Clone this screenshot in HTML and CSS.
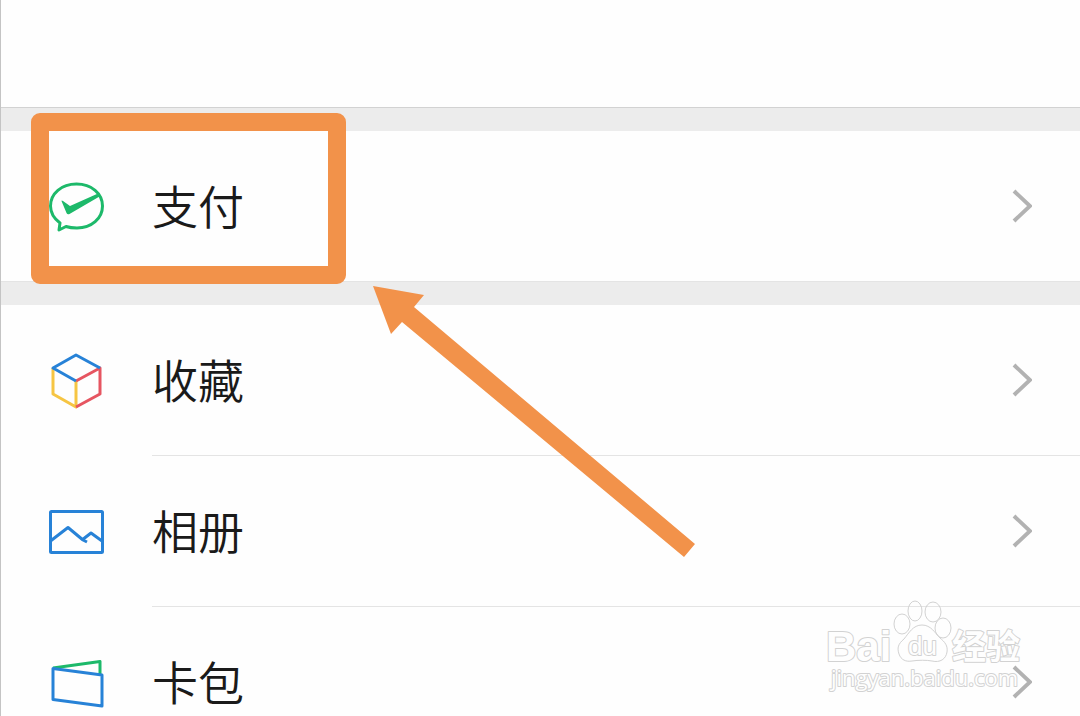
FILE: index.html
```html
<!DOCTYPE html>
<html lang="zh-CN">
<head>
    <meta charset="UTF-8">
    <meta name="viewport" content="width=device-width, initial-scale=1.0">
    <title>我</title>
    <link rel="stylesheet" href="styles.css">
</head>
<body>
    <header class="profile"></header>

    <nav class="menu">
        <div class="group">
            <a class="row" href="#pay">
                <svg class="icon" viewBox="0 0 56 56">
                    <path class="line green" d="M12 44 L11 51 L18 47.5 C21 48.5 25 49 29 49 C43.500 49 54.500 39.500 54.500 27 C54.500 14.500 43.500 5 28.500 5 C13.500 5 2.500 14.500 2.500 27 C2.500 34 6 39.500 12 44 Z"/>
                    <path class="fill-green" d="M13.500 22 Q13.500 21 15 22 L22 27 L50 14.500 L51.500 17.500 L21.500 35 Q19.500 36 18.500 34 Z"/>
                </svg>
                <span class="content">
                    <span class="label">支付</span>
                    <svg class="chevron" viewBox="0 0 20 36"><path d="M2 3 L18 18 L2 33"/></svg>
                </span>
            </a>
            <div class="highlight"></div>
        </div>

        <div class="group">
            <a class="row" href="#favorites">
                <svg class="icon" viewBox="0 0 56 56">
                    <path class="line yellow" d="M5 15 V41 L28 54 V28"/>
                    <path class="line red" d="M28 28 L52 15 V41 L28 54"/>
                    <path class="line blue" d="M28 28 L5 15 L28 2 L52 15"/>
                </svg>
                <span class="content">
                    <span class="label">收藏</span>
                    <svg class="chevron" viewBox="0 0 20 36"><path d="M2 3 L18 18 L2 33"/></svg>
                </span>
            </a>
            <a class="row" href="#album">
                <svg class="icon" viewBox="0 0 56 56">
                    <rect class="line blue" x="2.500" y="7.500" width="52" height="41" rx="1"/>
                    <path class="line blue" d="M2.500 37 L20 23.500 L35 36 L39 38 M34 36 L43 29 L54 37"/>
                </svg>
                <span class="content">
                    <span class="label">相册</span>
                    <svg class="chevron" viewBox="0 0 20 36"><path d="M2 3 L18 18 L2 33"/></svg>
                </span>
            </a>
            <a class="row" href="#cards">
                <svg class="icon" viewBox="0 0 56 56">
                    <path class="line green" d="M5 13 L52 6.500 V19"/>
                    <path class="line blue" d="M5 13.500 L54 20 V51 L5 44.500 Z"/>
                </svg>
                <span class="content">
                    <span class="label">卡包</span>
                    <svg class="chevron" viewBox="0 0 20 36"><path d="M2 3 L18 18 L2 33"/></svg>
                </span>
            </a>
            <svg class="arrow" viewBox="0 0 322 272">
                <path d="M0 0 L51 9 L41 21 L322 258 L311 271 L29 36 L18 48 Z"/>
            </svg>
        </div>
    </nav>

    <div class="watermark">
        <svg viewBox="0 0 210 100">
            <g class="outline">
                <ellipse cx="82" cy="27" rx="8" ry="10"/>
                <ellipse cx="95" cy="14" rx="7" ry="10"/>
                <ellipse cx="113" cy="15" rx="8" ry="10"/>
                <ellipse cx="123" cy="31" rx="8" ry="10"/>
                <path d="M102 28 C93 28 89 36 84 42 C78 47 77 51 79 57 C81 63 86 65 92 64 C98 63 107 63 112 64 C120 66 126 62 127 55 C128 49 125 45 120 41 C115 36 111 28 102 28 Z"/>
            </g>
            <text class="brand" x="6" y="64">Bai</text>
            <text class="du" x="88" y="58">du</text>
            <text class="cjk" x="132" y="62">经验</text>
            <text class="site" x="11" y="89">jingyan.baidu.com</text>
        </svg>
    </div>
</body>
</html>
```

FILE: styles.css
```css
* {
    box-sizing: border-box;
}
body {
    position: relative;
    height: 100vh;
    margin: 0;
    overflow: hidden;
    border-left: 1px solid #c4c4c4;
    background-color: #fefefe;
    color: #1a1a1a;
    font-family: "Noto Sans CJK SC", sans-serif;
}
.profile {
    height: 107px;
}
.group {
    position: relative;
    border-top: 24px solid #ececec;
}
.group::before {
    content: "";
    position: absolute;
    top: -24px;
    left: 0;
    right: 0;
    height: 1px;
    background-color: #e4e4e4;
}
.group:first-child::before {
    background-color: #d2d2d2;
}
.row {
    display: flex;
    align-items: stretch;
    gap: 48px;
    padding-left: 47px;
    color: inherit;
    text-decoration: none;
}
.icon {
    flex: none;
    align-self: center;
    width: 56px;
    height: 56px;
    margin-top: 2px;
}
.content {
    flex: 1;
    display: flex;
    align-items: center;
    justify-content: space-between;
    padding: 46px 48px 46px 0;
}
.row + .row .content {
    border-top: 1px solid #e4e4e4;
}
.label {
    padding-bottom: 4px;
    font-size: 46px;
    font-weight: 350;
    line-height: 54px;
}
.chevron {
    width: 20px;
    height: 36px;
}
.chevron path {
    fill: none;
    stroke: #b2b2b2;
    stroke-width: 4;
}

/* icon colours */
.line {
    fill: none;
    stroke-width: 3;
    stroke-linejoin: round;
}
.green {
    stroke: #1db96a;
}
.blue {
    stroke: #2782d7;
}
.red {
    stroke: #e65561;
}
.yellow {
    stroke: #f6c543;
}
.fill-green {
    fill: #1db96a;
}

/* annotations */
.highlight {
    position: absolute;
    top: -18px;
    left: 30px;
    width: 315px;
    height: 171px;
    border: 18px solid #f2924a;
    border-radius: 9px;
    z-index: 1;
}
.arrow {
    position: absolute;
    top: -19px;
    left: 372px;
    width: 322px;
    height: 272px;
    fill: #f2924a;
}
.watermark {
    position: absolute;
    right: 50px;
    bottom: 19px;
    width: 210px;
    height: 100px;
}
.watermark svg {
    display: block;
    width: 210px;
    height: 100px;
}
.outline,
.watermark text {
    fill: #fefefe;
    stroke: #d2d2d2;
    stroke-width: 1;
}
.outline {
    fill: none;
}
.watermark text {
    stroke-width: 2;
    stroke-linejoin: round;
    paint-order: stroke;
}
.brand {
    font: bold 42px "Liberation Sans", sans-serif;
}
.du {
    font: 26px "Liberation Sans", sans-serif;
}
.cjk {
    font: bold 34px "Noto Sans CJK SC", sans-serif;
}
.site {
    font: 22px "Open Sans", sans-serif;
}
```
